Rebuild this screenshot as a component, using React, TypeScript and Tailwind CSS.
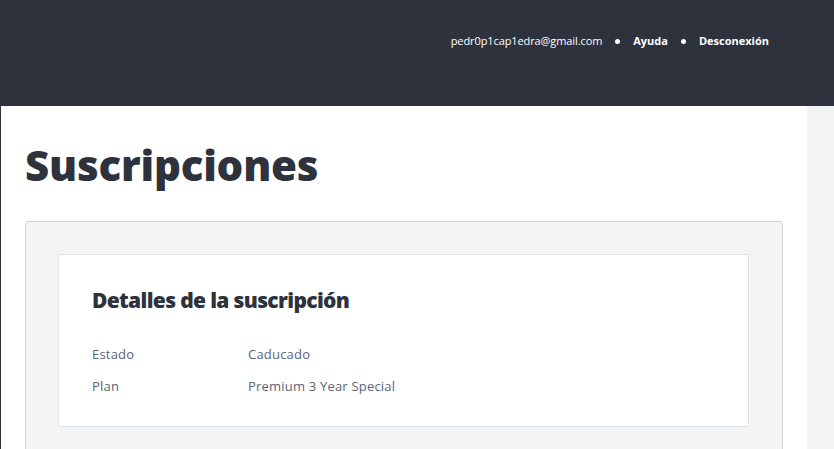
export default function App() {
  return (
    <div className="min-h-[449px] bg-[#f3f4f6] font-['Open_Sans',sans-serif] text-[#2d323c]">
      <header className="flex h-[106px] items-start justify-end bg-[#2d323c] pr-[65px] pt-[33px] text-[11px] text-white">
        <div className="flex items-center">
          <span className="tracking-[-0.1px]">pedr0p1cap1edra@gmail.com</span>
          <span className="mx-[13px] h-[5px] w-[5px] rounded-full bg-white" />
          <span className="font-bold">Ayuda</span>
          <span className="mx-[13px] h-[5px] w-[5px] rounded-full bg-white" />
          <span className="font-bold">Desconexión</span>
        </div>
      </header>
      <main className="mr-[27px] min-h-[343px] border-l border-[#2d323c] bg-white px-6 pt-[34px]">
        <h1 className="text-[42px] font-extrabold leading-[50px] tracking-[-0.2px]">Suscripciones</h1>
        <section className="mt-[31px] rounded-[3px] border border-[#cfd2d6] bg-[#f3f4f6] pl-8 pr-[33px] pt-8 pb-8">
          <div className="rounded-[2px] border border-[#e1e3e6] bg-white px-[33px] pt-[31px] pb-[30px]">
            <h2 className="text-[21px] font-extrabold leading-[28px] tracking-[-0.65px]">Detalles de la suscripción</h2>
            <dl className="mt-[30px] grid grid-cols-[156px_1fr] gap-y-[12px] text-[13px] leading-[20px] tracking-[0.2px] text-[#5b6475]">
              <dt>Estado</dt>
              <dd>Caducado</dd>
              <dt>Plan</dt>
              <dd>Premium 3 Year Special</dd>
            </dl>
          </div>
        </section>
      </main>
    </div>
  );
}
